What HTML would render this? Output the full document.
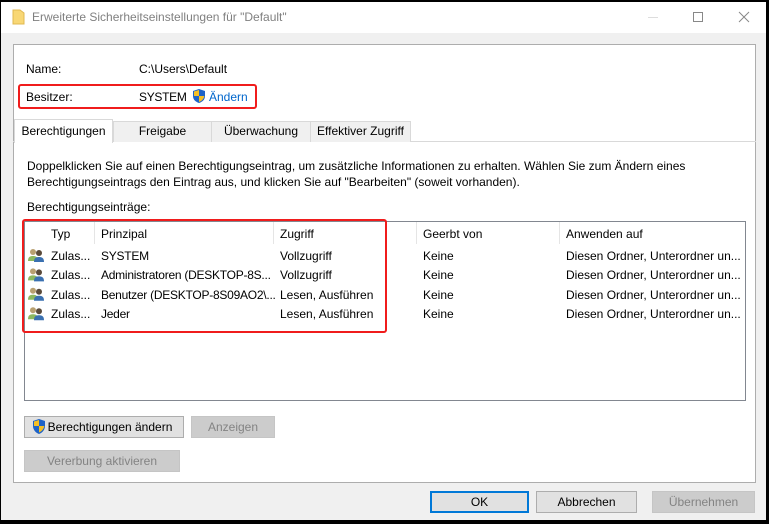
<!DOCTYPE html>
<html><head><meta charset="utf-8"><style>
*{margin:0;padding:0;box-sizing:border-box}
body{width:769px;height:524px;background:#000;position:relative;overflow:hidden;font-family:"Liberation Sans",sans-serif;font-size:12px;color:#000}
.a{position:absolute;white-space:nowrap}
.win{position:absolute;left:1px;top:2px;width:765px;height:518px;background:#f0f0f0}
.title{position:absolute;left:0;top:0;width:765px;height:31px;background:#fff}
.btn{position:absolute;height:22px;border:1px solid #adadad;background:#e1e1e1;text-align:center;line-height:20px}
.dis{color:#838383;border-color:#c5c5c5;background:#cccccc}
.tab{position:absolute;top:121px;height:21px;border:1px solid #d9d9d9;border-bottom:none;background:#f0f0f0;text-align:center;line-height:19px}
</style></head><body>
<div class="win"></div>
<div class="title" style="left:1px;top:2px"></div>
<svg class="a" style="left:12px;top:9px" width="13" height="16"><path d="M1 1h7l4 3v11H1z" fill="#f8d775" stroke="#e0b850"/></svg>
<div class="a" style="left:32px;top:10px;color:#808080">Erweiterte Sicherheitseinstellungen für "Default"</div>
<div class="a" style="left:648px;top:17px;width:10px;height:1px;background:#ddd"></div>
<div class="a" style="left:693px;top:12px;width:10px;height:10px;border:1px solid #888"></div>
<svg class="a" style="left:738px;top:11px" width="12" height="12"><path d="M1 1L11 11M11 1L1 11" stroke="#888"/></svg>

<div class="a" style="left:13px;top:44px;width:743px;height:439px;background:#fff;border:1px solid #adadad"></div>
<div class="a" style="left:26px;top:62px">Name:</div>
<div class="a" style="left:139px;top:62px">C:\Users\Default</div>
<div class="a" style="left:18px;top:84px;width:239px;height:25px;border:2px solid #f01c1c;border-radius:3px"></div>
<div class="a" style="left:26px;top:90px">Besitzer:</div>
<div class="a" style="left:139px;top:90px;letter-spacing:-0.3px">SYSTEM</div>
<svg class="a" style="left:192px;top:88px" width="14" height="16"><path d="M7 1L1 3v5c0 4 3 6 6 7 3-1 6-3 6-7V3z" fill="#1e63c8"/><path d="M7 2v6H2V3.5z" fill="#f6c024"/><path d="M7 8h5.3c-.5 3-2.8 5-5.3 6z" fill="#f6c024"/></svg>
<div class="a" style="left:209px;top:90px;color:#0066cc">Ändern</div>

<div class="a" style="left:13px;top:141px;width:743px;height:1px;background:#d9d9d9"></div>
<div class="tab" style="left:113px;width:99px">Freigabe</div>
<div class="tab" style="left:211px;width:100px">Überwachung</div>
<div class="tab" style="left:310px;width:101px">Effektiver Zugriff</div>
<div class="tab" style="left:14px;top:119px;height:24px;width:99px;background:#fff;line-height:23px">Berechtigungen</div>

<div class="a" style="left:27px;top:159px">Doppelklicken Sie auf einen Berechtigungseintrag, um zusätzliche Informationen zu erhalten. Wählen Sie zum Ändern eines</div>
<div class="a" style="left:27px;top:175px">Berechtigungseintrags den Eintrag aus, und klicken Sie auf "Bearbeiten" (soweit vorhanden).</div>
<div class="a" style="left:27px;top:200px">Berechtigungseinträge:</div>

<div class="a" style="left:24px;top:221px;width:722px;height:180px;border:1px solid #828790;background:#fff"></div>
<div class="a" style="left:94px;top:222px;width:1px;height:22px;background:#e5e5e5"></div>
<div class="a" style="left:273px;top:222px;width:1px;height:22px;background:#e5e5e5"></div>
<div class="a" style="left:416px;top:222px;width:1px;height:22px;background:#e5e5e5"></div>
<div class="a" style="left:559px;top:222px;width:1px;height:22px;background:#e5e5e5"></div>
<div class="a" style="left:51px;top:227px">Typ</div>
<div class="a" style="left:101px;top:227px">Prinzipal</div>
<div class="a" style="left:280px;top:227px">Zugriff</div>
<div class="a" style="left:423px;top:227px">Geerbt von</div>
<div class="a" style="left:566px;top:227px">Anwenden auf</div>

<div class="a" style="left:22px;top:219px;width:365px;height:114px;border:2px solid #f01c1c;border-radius:3px"></div>

<div class="a" style="left:28px;top:247px;line-height:19.4px">
<svg width="17" height="78"><g id="u"><circle cx="5" cy="5" r="3" fill="#b8a070"/><path d="M0 14c0-4 2-5 5-5s5 1 5 5z" fill="#8cb860"/><circle cx="11" cy="6" r="3" fill="#5a4a3a"/><path d="M6 15c0-4 2-5 5-5s5 1 5 5z" fill="#3a70b0"/></g><use href="#u" y="19.4"/><use href="#u" y="38.8"/><use href="#u" y="58.2"/></svg></div>
<div class="a" style="left:51px;top:247px;line-height:19.4px">Zulas...<br>Zulas...<br>Zulas...<br>Zulas...</div>
<div class="a" style="left:101px;top:247px;line-height:19.4px;letter-spacing:-0.25px">SYSTEM<br>Administratoren (DESKTOP-8S...<br>Benutzer (DESKTOP-8S09AO2\...<br>Jeder</div>
<div class="a" style="left:280px;top:247px;line-height:19.4px">Vollzugriff<br>Vollzugriff<br>Lesen, Ausführen<br>Lesen, Ausführen</div>
<div class="a" style="left:423px;top:247px;line-height:19.4px">Keine<br>Keine<br>Keine<br>Keine</div>
<div class="a" style="left:566px;top:247px;line-height:19.4px">Diesen Ordner, Unterordner un...<br>Diesen Ordner, Unterordner un...<br>Diesen Ordner, Unterordner un...<br>Diesen Ordner, Unterordner un...</div>

<div class="btn" style="left:24px;top:416px;width:160px;padding-left:12px">Berechtigungen ändern</div>
<svg class="a" style="left:32px;top:418px" width="14" height="17"><path d="M7 1L1 3v5c0 4 3 7 6 8 3-1 6-4 6-8V3z" fill="#1e63c8"/><path d="M7 2v6H2V3.5z" fill="#f6c024"/><path d="M7 8h5.3c-.5 3-2.8 5.5-5.3 6.5z" fill="#f6c024"/></svg>
<div class="btn dis" style="left:191px;top:416px;width:84px">Anzeigen</div>
<div class="btn dis" style="left:24px;top:450px;width:156px">Vererbung aktivieren</div>

<div class="btn" style="left:430px;top:491px;width:99px;border:2px solid #0078d7;line-height:18px">OK</div>
<div class="btn" style="left:536px;top:491px;width:101px">Abbrechen</div>
<div class="btn dis" style="left:652px;top:491px;width:103px">Übernehmen</div>
</body></html>
